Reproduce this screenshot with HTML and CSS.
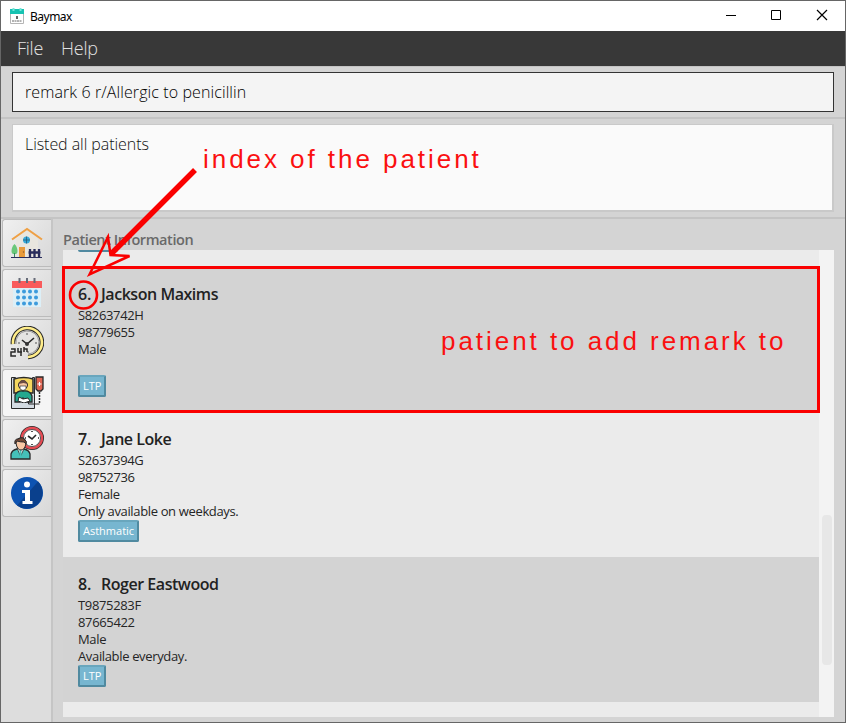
FILE: index.html
```html
<!DOCTYPE html>
<html lang="en">
<head>
<meta charset="utf-8">
<title>Baymax</title>
<link rel="stylesheet" href="styles.css">
</head>
<body>
<div class="window">
  <header class="titlebar">
    <svg class="app-icon" width="14" height="16" viewBox="0 0 14 16"><path fill="#fff" stroke="#b5b5b5" d="M.5 2.500h13v13H.5z"/><path fill="#17c3b2" d="M0 1h14v5H0z"/><path stroke="#76e5da" stroke-width="2" d="M3.500 0v3M10.500 0v3"/><path stroke="#333" stroke-width="1.500" d="M7 8v3"/><path stroke="#666" stroke-dasharray="2 .5" d="M2 13h10"/></svg>
    <span class="app-name">Baymax</span>
    <svg class="controls" width="108" height="14" viewBox="0 0 108 14" fill="none" stroke="#000"><path d="M1 7.500h10"/><path d="M46.500 2.500h9v9h-9z"/><path stroke-width="1.200" d="M92 2l10 10M102 2L92 12"/></svg>
  </header>
  <nav class="menubar"><span class="m-file">File</span><span>Help</span></nav>
  <div class="command-pane"><div class="command"><span>remark 6 r/Allergic to penicillin</span></div></div>
  <div class="result-pane"><div class="result"><span>Listed all patients</span></div></div>
  <div class="main">
    <aside class="tabs">
      <div class="tab"><svg width="32" height="32" viewBox="0 0 32 32"><path fill="#e9e6df" d="M5 12L16 3l11 9v18H5z"/><path fill="none" stroke="#efa044" stroke-width="2" d="M1 12.500L16 2l15 10.500"/><circle cx="15.500" cy="13" r="3.500" fill="#37a9da"/><path stroke="#285d79" stroke-width=".8" d="M12 13h7M15.500 9.500v7"/><path fill="#e99b3b" d="M8 20h6v10H8z"/><circle cx="12.500" cy="25" r=".7" fill="#8a562b"/><path fill="#69c779" d="M3.500 17c2 2 3 4.500 3 7s-1 3-3 3-3-.5-3-3 1-5 3-7z"/><path stroke="#38895b" d="M3.500 26v4"/><path stroke="#292d5c" stroke-width="2.300" d="M19 22v8M23.500 22v8M28 22v8M17.500 25.500h12"/><path stroke="#292d5c" d="M0 30.500h31"/></svg></div>
      <div class="tab"><svg width="32" height="32" viewBox="0 0 32 32"><path fill="#dceff7" d="M2 10h28v20H2z"/><path fill="#f95b5c" d="M1 4h30v7H1z"/><path stroke="#666b78" stroke-width="2" d="M8.500 1v5M16 1v5M23.500 1v5"/><g fill="none" stroke="#3d9bdc" stroke-width="4" stroke-linecap="round" stroke-dasharray="0 6"><path d="M7 14.500h19M7 20.500h19M7 26.500h19"/></g></svg></div>
      <div class="tab"><svg width="34" height="34" viewBox="0 0 34 34"><path fill="none" stroke="#292929" stroke-width="4.600" d="M3 18a14.500 14.500 0 1 1 15 13"/><path fill="none" stroke="#ffed8a" stroke-width="2.600" d="M3 18a14.500 14.500 0 1 1 15 13"/><path fill="#e4e4e2" stroke="#777" stroke-width=".7" d="M6 18a11.500 11.500 0 1 1 12 10"/><path stroke="#292929" stroke-width="1.600" fill="none" d="M12 14l5 4 7-6"/><circle cx="17" cy="18" r="2" fill="#333"/><path stroke="#555" d="M17 7v2M25 17h2M18 25v2M8 17h2"/><path fill="none" stroke="#292929" stroke-width="1.500" d="M1 23h4v3H1v4h5M8 22v4h4M11 22v8M14 21v5M14 23h3v3"/></svg></div>
      <div class="tab selected"><svg width="34" height="34" viewBox="0 0 34 34"><path fill="#d4dbe2" stroke="#292929" d="M1.500 1.500h4v4h17v-4h2v31h-23z"/><path fill="#f6d75e" stroke="#292929" stroke-width="1.500" d="M4 3q10-3 19 0v14H4z"/><circle cx="13" cy="9" r="4.500" fill="#f7c7a2" stroke="#292929"/><path fill="#6c4b42" d="M8.500 8q4.500-8 9 0l-4-1z"/><path fill="#fff" stroke="#333" stroke-width=".7" d="M10 10h6v3q-3 3-6 0z"/><path fill="#24a98f" stroke="#292929" stroke-width="1.300" d="M5 26v-7q3-5 8-4 7-1 9 5v6h-5l-4-4-3 4z"/><path fill="#fff" stroke="#292929" d="M9 21l4 2 5-1 2 3-6 2-6-2z"/><path fill="#d4dbe2" d="M2 27h21v5H2z"/><path fill="#df6553" stroke="#292929" stroke-width="1.300" d="M26 1h7v12l-2 2h-3l-2-2z"/><path stroke="#fff" d="M29.500 6v4M27.500 8h4"/><path fill="none" stroke="#292929" stroke-width="1.500" stroke-dasharray="2 1" d="M29.500 16v11"/><path fill="none" stroke="#292929" d="M29.500 28h-11v-2"/></svg></div>
      <div class="tab"><svg width="34" height="34" viewBox="0 0 34 34"><circle cx="22" cy="12" r="10" fill="#fff" stroke="#292929" stroke-width="4"/><circle cx="22" cy="12" r="10" fill="#fff" stroke="#e64b53" stroke-width="2.400"/><circle cx="22" cy="12" r="8.500" stroke="#292929" stroke-width=".8" fill="none"/><path fill="none" stroke="#292929" stroke-width="1.600" d="M18 10l4 3 4-4M22 5v1M22 18v1M15 12h1M28 12h1"/><path fill="#45c0b9" stroke="#292929" stroke-width="1.300" d="M1 33v-5q1-4 6-5h7q5 1 6 5v5z"/><path fill="#fff" stroke="#292929" stroke-width=".8" d="M7 22l3.500 8 4-8z"/><path stroke="#45c0b9" stroke-width="2" d="M10.500 24v6"/><path fill="#f9c8a5" stroke="#292929" d="M6 17q0-5 5-5t5 5q-1 7-5 7t-5-7z"/><path fill="#754836" stroke="#292929" d="M5 18q-1-5 3-5 5-3 7 1 2 1 1 4l-2-2q-4 0-7-1z"/></svg></div>
      <div class="tab"><svg width="34" height="34" viewBox="0 0 34 34"><circle cx="17" cy="17" r="16" fill="#0d53b2"/><path fill="#0a408d" d="M7 29.500A16 16 0 0 0 28 5.500z"/><circle cx="17" cy="8.500" r="3" fill="#fff"/><path fill="#fff" d="M12 14h8v11h2.500v3h-10v-3H15v-8h-3z"/></svg></div>
    </aside>
    <section class="patients">
      <h1><span>Patient Information</span></h1>
      <div class="list-wrap">
        <div class="list">
          <div class="previous"><i></i></div>
          <article class="card dark"><h2><b>6.</b><span>Jackson Maxims</span></h2><p class="pid">S8263742H</p><p class="phone">98779655</p><p>Male</p><p class="remark"></p><span class="tag">LTP</span></article>
          <article class="card"><h2><b>7.</b><span>Jane Loke</span></h2><p class="pid">S2637394G</p><p class="phone">98752736</p><p>Female</p><p class="remark">Only available on weekdays.</p><span class="tag">Asthmatic</span></article>
          <article class="card dark"><h2><b>8.</b><span>Roger Eastwood</span></h2><p class="pid">T9875283F</p><p class="phone">87665422</p><p>Male</p><p class="remark">Available everyday.</p><span class="tag">LTP</span></article>
        </div>
        <div class="scroll"><div class="thumb"></div></div>
      </div>
    </section>
  </div>
</div>
<svg class="annotations" width="846" height="723" viewBox="0 0 846 723" fill="none" stroke="#fa0000"><path stroke-width="3" d="M63.500 267.500h755v144h-755z"/><circle cx="83.500" cy="295" r="13.500" stroke-width="2.600"/><path stroke-width="5.500" d="M195 170L111 254"/><path stroke-width="2.500" d="M89.500 274.500L108 237l2.500 18 19 1z"/></svg>
<div class="note note-index">index of the patient</div>
<div class="note note-patient">patient to add remark to</div>
</body>
</html>
```
FILE: styles.css
```css
* { box-sizing: border-box; }
body { margin: 0; width: 846px; height: 723px; overflow: hidden; font-family: "Open Sans", "Noto Sans", sans-serif; color: #252525; }
.window { width: 846px; height: 723px; border: 1px solid #666; background: #d4d4d4; display: flex; flex-direction: column; }
.titlebar { height: 30px; flex: none; background: #fff; display: flex; align-items: center; padding: 0 12px 0 9px; }
.controls { margin-bottom: 2px; }
.app-icon { margin-right: 6px; }
.app-name { font: 12px "Noto Sans", sans-serif; color: #000; letter-spacing: -.5px; flex: 1; }
.menubar { height: 35px; flex: none; background: #383838; color: #e2e2e2; display: flex; align-items: center; gap: 18px; padding: 0 0 2px 16px; font-size: 18px; font-weight: 300; letter-spacing: -.25px; }
.command-pane { height: 53px; flex: none; border: 1px solid #c4c4c4; border-width: 1px 0 2px; padding: 5px 11px; }
.command { height: 40px; border: 1px solid #333; background: #f4f4f4; padding: 0 12px; line-height: 38px; font-size: 16px; font-weight: 300; color: #000; letter-spacing: .1px; }
.result-pane { height: 100px; flex: none; border-bottom: 2px solid #c4c4c4; padding: 5px 11px; }
.result { height: 88px; background: #fafafa; border: 1px solid #c9c9c9; border-width: 1px 2px 2px 1px; padding: 7px 12px; line-height: 24px; font-size: 16px; font-weight: 300; letter-spacing: -.06px; color: #111; }
.main { flex: 1; display: flex; min-height: 0; }
.tabs { width: 52px; background: #ddd; border-right: 2px solid #c5c5c5; padding: 0 0 0 1px; display: flex; flex-direction: column; gap: 2px; }
.tab { height: 48px; flex: none; border: 1px solid #bbb; border-right: 0; border-radius: 3px 0 0 3px; background: linear-gradient(125deg, #f0f0f0, #d8d8d8); display: flex; align-items: center; justify-content: center; }
.tab.selected { background: #f5f5f5; }
.patients { flex: 1; padding: 10px 11px 5px 10px; display: flex; flex-direction: column; }
h1 { margin: 0; height: 21px; font-size: 14.500px; line-height: 21px; font-weight: 600; color: #696969; letter-spacing: -.42px; }
.list-wrap { flex: 1; display: flex; min-height: 0; }
.list { width: 756px; background: #ebebeb; overflow: hidden; }
.previous { height: 17px; padding-left: 15px; }
.previous i { display: block; width: 40px; height: 2px; background: #5089a0; border-radius: 0 0 3px 3px; }
.card { height: 145px; padding: 15px; }
.card.dark { background: #d3d3d3; }
h2 { display: flex; margin: 0; height: 25px; line-height: 25px; font-size: 16px; font-weight: 600; letter-spacing: -.46px; color: #222; }
h2 b { width: 23px; font-weight: 600; letter-spacing: -.2px; }
p { margin: 0; height: 17px; line-height: 17px; font-size: 13px; letter-spacing: -.35px; }
.tag { display: block; width: max-content; height: 22px; border: 2px solid #508aa0; border-top-color: #69a6bd; border-radius: 2px; background: #77b6d0; color: #fff; padding: 0 3px; line-height: 18px; font-size: 11px; }
.scroll { width: 15px; background: #f3f3f3; padding: 265px 2px 0 3px; }
.thumb { height: 150px; background: #e7e7e7; border-radius: 4px; }
.annotations { position: absolute; left: 0; top: 0; }
.note { position: absolute; font: 26px/30px "Liberation Sans", sans-serif; color: #fa1010; letter-spacing: 2.950px; white-space: nowrap; }
.note-index { left: 203px; top: 144px; }
.note-patient { left: 441px; top: 326px; }
```
